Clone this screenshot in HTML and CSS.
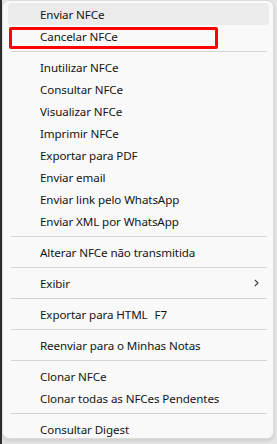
FILE: index.html
```html
<!DOCTYPE html>
<html lang="pt-BR">
<head>
    <meta charset="UTF-8">
    <meta name="viewport" content="width=device-width, initial-scale=1.0">
    <title>Menu NFCe</title>
    <link rel="stylesheet" href="styles.css">
</head>
<body>
    <div class="screen">
        <div class="edge"></div>
        <div class="menu">
            <div class="item hover">Enviar NFCe</div>
            <div class="item">Cancelar NFCe</div>
            <div class="sep"></div>
            <div class="item">Inutilizar NFCe</div>
            <div class="item">Consultar NFCe</div>
            <div class="item">Visualizar NFCe</div>
            <div class="item">Imprimir NFCe</div>
            <div class="item">Exportar para PDF</div>
            <div class="item">Enviar email</div>
            <div class="item">Enviar link pelo WhatsApp</div>
            <div class="item">Enviar XML por WhatsApp</div>
            <div class="sep"></div>
            <div class="item">Alterar NFCe não transmitida</div>
            <div class="sep"></div>
            <div class="item sub">Exibir
                <svg class="chev" width="5" height="8" viewBox="0 0 5 8"><path d="M0.8 0.8 L4 4 L0.8 7.2" fill="none" stroke="#333" stroke-width="1.1"/></svg>
            </div>
            <div class="sep"></div>
            <div class="item">Exportar para HTML<span class="key">F7</span></div>
            <div class="sep"></div>
            <div class="item">Reenviar para o Minhas Notas</div>
            <div class="sep"></div>
            <div class="item">Clonar NFCe</div>
            <div class="item">Clonar todas as NFCes Pendentes</div>
            <div class="sep"></div>
            <div class="item">Consultar Digest</div>
            <div class="mark"></div>
        </div>
    </div>
</body>
</html>
```

FILE: styles.css
```css
body {
    margin: 0;
    background: #e6e6e6;
    font-family: 'Noto Sans', sans-serif;
    font-size: 11.6px;
    letter-spacing: -0.1px;
    color: #141414;
}

.screen {
    display: flex;
    height: 444px;
    overflow: hidden;
}

.edge {
    width: 2px;
    background: #2e2e2e;
}

.menu {
    position: relative;
    width: 270px;
    height: 435px;
    padding-top: 2px;
    background: #f9f9f9;
    border: 1px solid #dcdcdc;
    border-radius: 7px;
    box-shadow: 0 2px 4px rgba(0,0,0,0.12);
}

.item {
    display: flex;
    align-items: center;
    height: 22px;
    margin: 0 4px 0 5px;
    padding-left: 32px;
    border-radius: 4px;
    white-space: nowrap;
}

.item.hover {
    background: #ebebeb;
}

.item.sub {
    justify-content: space-between;
    padding-right: 10px;
}

.key {
    margin-left: 7px;
}

.sep {
    height: 1px;
    margin: 4px 6px 4px 8px;
    background: #d4d4d4;
}

.mark {
    position: absolute;
    left: 6px;
    top: 26px;
    width: 203px;
    height: 16px;
    border: 3px solid #ff0000;
    border-radius: 2px;
}
```
